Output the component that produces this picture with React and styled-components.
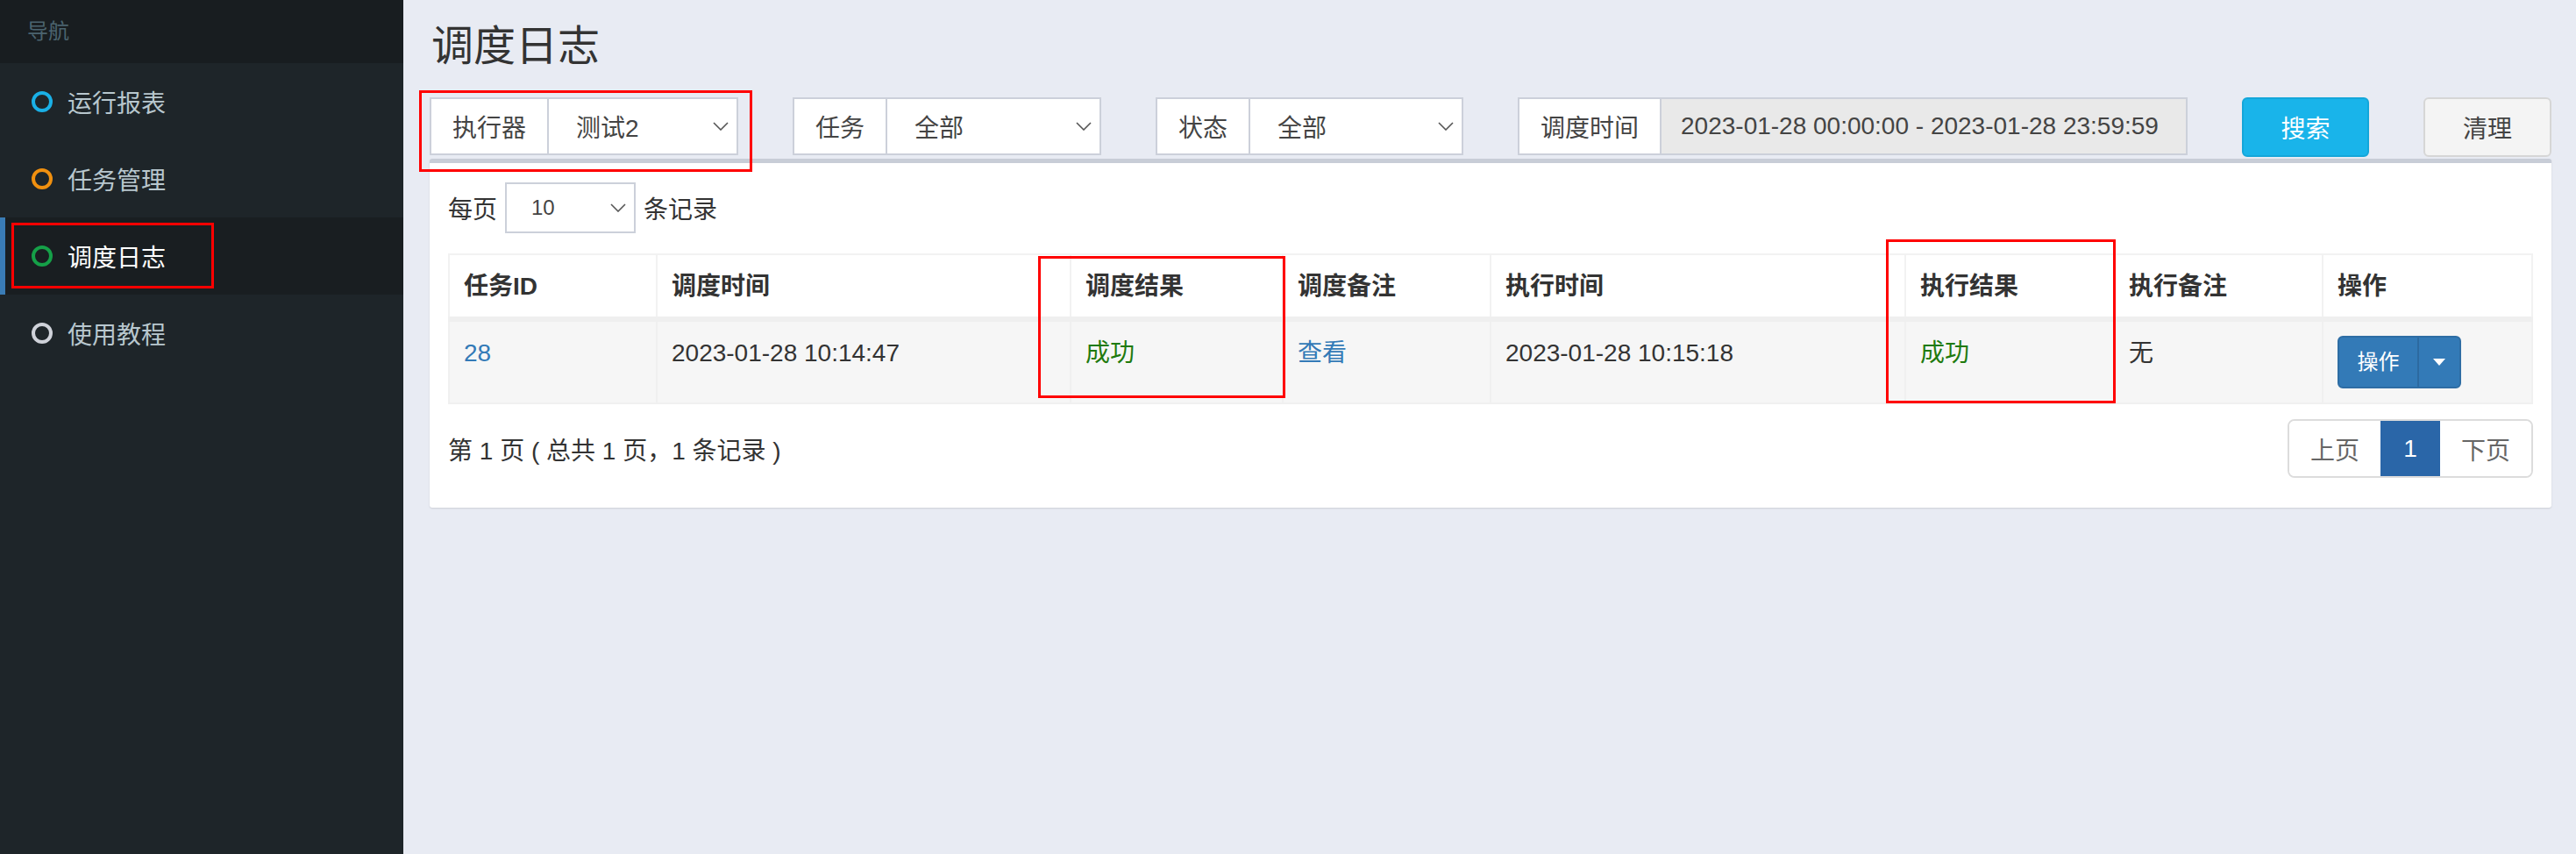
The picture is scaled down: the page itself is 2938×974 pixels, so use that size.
import React from 'react';
import styled, { createGlobalStyle } from 'styled-components';

const GlobalStyle = createGlobalStyle`
  * { box-sizing: border-box; }
  body {
    margin: 0;
    font-family: "Liberation Sans", "Noto Sans CJK SC", sans-serif;
    color: #333;
  }
`;

const Layout = styled.div`
  position: relative;
  display: flex;
  min-height: 100vh;
`;

const Sidebar = styled.aside`
  width: 460px;
  flex-shrink: 0;
  background: #1e2529;
`;

const NavHeader = styled.div`
  height: 72px;
  line-height: 72px;
  padding-left: 31px;
  background: #181d20;
  color: #4b646f;
  font-size: 24px;
`;

const NavItem = styled.div`
  display: flex;
  align-items: center;
  gap: 17px;
  height: 88px;
  padding-left: ${p => (p.active ? 30 : 36)}px;
  border-left: ${p => (p.active ? '6px solid #3a7cb5' : 'none')};
  background: ${p => (p.active ? '#191e21' : 'transparent')};
  color: ${p => (p.active ? '#fff' : '#b8c7ce')};
  font-size: 28px;
`;

const Dot = styled.span`
  width: 24px;
  height: 24px;
  border-radius: 50%;
  border: 4px solid ${p => p.color};
`;

const Main = styled.main`
  flex: 1;
  background: #e8ebf3;
  padding: 26px 28px 0 30px;
`;

const Title = styled.h1`
  margin: 0 0 32px 2px;
  font-size: 48px;
  line-height: 53px;
  font-weight: 400;
  color: #333;
`;

const FilterRow = styled.div`
  display: grid;
  grid-template-columns: 352px 352px 351px 764px 145px 146px;
  column-gap: 62px;
  margin-bottom: 2px;
`;

const InputGroup = styled.div`
  display: flex;
  height: 66px;
  border: 2px solid #ccd0da;
  background: #fff;
  font-size: 28px;
  color: #444;
`;

const Addon = styled.div`
  display: flex;
  align-items: center;
  padding: 0 24px;
  border-right: 2px solid #ccd0da;
  white-space: nowrap;
`;

const SelectBox = styled.div`
  flex: 1;
  display: flex;
  align-items: center;
  justify-content: space-between;
  padding: 0 9px 0 31px;
  background: ${p => (p.readOnly ? '#e9e9e9' : '#fff')};
  white-space: nowrap;
`;

const DateBox = styled(SelectBox)`
  padding-left: 22px;
  color: #444;
`;

const Button = styled.button`
  height: 68px;
  border-radius: 6px;
  font-family: inherit;
  font-size: 28px;
  border: 2px solid ${p => (p.primary ? '#14a6d9' : '#d6d6d6')};
  background: ${p => (p.primary ? '#19b4ea' : '#f4f4f4')};
  color: ${p => (p.primary ? '#fff' : '#444')};
`;

const Card = styled.section`
  background: #fff;
  border-top: 5px solid #c8cdd7;
  border-radius: 3px;
  box-shadow: 0 1px 2px rgba(0, 0, 0, 0.12);
  padding: 22px 21px 34px;
`;

const PerPage = styled.div`
  display: flex;
  align-items: center;
  gap: 9px;
  font-size: 28px;
  color: #333;
`;

const SmallSelect = styled.div`
  width: 149px;
  height: 58px;
  border: 2px solid #ccd0da;
  display: flex;
  align-items: center;
  justify-content: space-between;
  padding: 0 9px 0 28px;
  font-size: 24px;
  color: #444;
`;

const Table = styled.table`
  width: 100%;
  margin-top: 23px;
  border-collapse: collapse;
  border: 2px solid #f2f2f2;
  table-layout: fixed;
  font-size: 28px;
`;

const Th = styled.th`
  text-align: left;
  font-weight: 700;
  padding: 16px 16px 14px;
  height: 74px;
  line-height: 40px;
  vertical-align: top;
  border: 2px solid #f2f2f2;
  border-bottom: 6px solid #efefef;
  color: #333;
`;

const Td = styled.td`
  padding: 16px;
  height: 92px;
  line-height: 40px;
  vertical-align: top;
  background: #f6f6f6;
  border: 2px solid #f0f0f0;
  color: ${p => (p.tone === 'link' ? '#337ab7' : p.tone === 'ok' ? '#1f7a0e' : '#333')};
`;

const SplitButton = styled.div`
  display: inline-flex;
  height: 60px;
  border: 2px solid #2e6da4;
  border-radius: 6px;
  background: #337ab7;
  color: #fff;
  font-size: 24px;
  overflow: hidden;
`;

const SplitPart = styled.span`
  display: flex;
  align-items: center;
  justify-content: center;
  width: ${p => p.w}px;
  border-left: ${p => (p.divider ? '2px solid #2c6aa0' : 'none')};
`;

const Footer = styled.div`
  display: flex;
  justify-content: space-between;
  align-items: center;
  margin-top: 17px;
  font-size: 28px;
  color: #333;
`;

const Pager = styled.div`
  display: flex;
  height: 67px;
  border: 2px solid #dcdcdc;
  border-radius: 8px;
  overflow: hidden;
`;

const PageLink = styled.span`
  display: flex;
  align-items: center;
  justify-content: center;
  width: ${p => p.w}px;
  font-size: 28px;
  background: ${p => (p.active ? '#2a66a8' : '#fff')};
  color: ${p => (p.active ? '#fff' : '#666')};
`;

const Annotation = styled.div`
  position: absolute;
  left: ${p => p.x}px;
  top: ${p => p.y}px;
  width: ${p => p.w}px;
  height: ${p => p.h}px;
  border: 3px solid #f00;
  pointer-events: none;
`;

const Chevron = () => (
  <svg width="18" height="10" viewBox="0 0 18 10" fill="none">
    <polyline points="1,1 9,9 17,1" stroke="#555" strokeWidth="1.6" />
  </svg>
);

const Caret = () => (
  <svg width="14" height="8" viewBox="0 0 14 8">
    <polygon points="0,0 14,0 7,8" fill="#fff" />
  </svg>
);

const navItems = [
  { label: '运行报表', color: '#1ab0e6' },
  { label: '任务管理', color: '#f0900f' },
  { label: '调度日志', color: '#15a048', active: true },
  { label: '使用教程', color: '#cfd2d9' },
];

const columns = [237, 472, 242, 237, 473, 238, 238, 239];
const headers = ['任务ID', '调度时间', '调度结果', '调度备注', '执行时间', '执行结果', '执行备注', '操作'];

export default function App() {
  return (
    <Layout>
      <GlobalStyle />
      <Sidebar>
        <NavHeader>导航</NavHeader>
        {navItems.map(item => (
          <NavItem key={item.label} active={item.active}>
            <Dot color={item.color} />
            {item.label}
          </NavItem>
        ))}
      </Sidebar>

      <Main>
        <Title>调度日志</Title>
        <FilterRow>
          <InputGroup>
            <Addon>执行器</Addon>
            <SelectBox>测试2<Chevron /></SelectBox>
          </InputGroup>
          <InputGroup>
            <Addon>任务</Addon>
            <SelectBox>全部<Chevron /></SelectBox>
          </InputGroup>
          <InputGroup>
            <Addon>状态</Addon>
            <SelectBox>全部<Chevron /></SelectBox>
          </InputGroup>
          <InputGroup>
            <Addon>调度时间</Addon>
            <DateBox readOnly>2023-01-28 00:00:00 - 2023-01-28 23:59:59</DateBox>
          </InputGroup>
          <Button primary>搜索</Button>
          <Button>清理</Button>
        </FilterRow>

        <Card>
          <PerPage>
            每页
            <SmallSelect>10<Chevron /></SmallSelect>
            条记录
          </PerPage>

          <Table>
            <colgroup>
              {columns.map((w, i) => <col key={i} style={{ width: w }} />)}
            </colgroup>
            <thead>
              <tr>
                {headers.map(h => <Th key={h}>{h}</Th>)}
              </tr>
            </thead>
            <tbody>
              <tr>
                <Td tone="link">28</Td>
                <Td>2023-01-28 10:14:47</Td>
                <Td tone="ok">成功</Td>
                <Td tone="link">查看</Td>
                <Td>2023-01-28 10:15:18</Td>
                <Td tone="ok">成功</Td>
                <Td>无</Td>
                <Td>
                  <SplitButton>
                    <SplitPart w={89}>操作</SplitPart>
                    <SplitPart w={48} divider><Caret /></SplitPart>
                  </SplitButton>
                </Td>
              </tr>
            </tbody>
          </Table>

          <Footer>
            <span>第 1 页 ( 总共 1 页，1 条记录 )</span>
            <Pager>
              <PageLink w={104}>上页</PageLink>
              <PageLink w={68} active>1</PageLink>
              <PageLink w={104}>下页</PageLink>
            </Pager>
          </Footer>
        </Card>
      </Main>

      <Annotation x={13} y={254} w={231} h={75} />
      <Annotation x={478} y={103} w={380} h={93} />
      <Annotation x={1184} y={292} w={282} h={162} />
      <Annotation x={2151} y={273} w={262} h={187} />
    </Layout>
  );
}
